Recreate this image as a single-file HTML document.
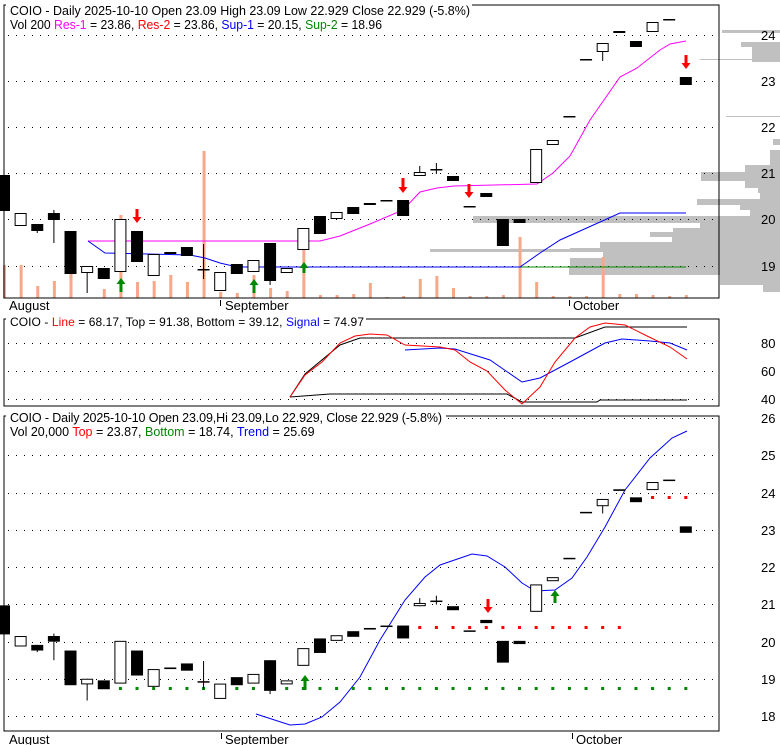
<!DOCTYPE html>
<html><head><meta charset="utf-8"><style>
html,body{margin:0;padding:0;background:#fff;width:780px;height:745px;overflow:hidden}
svg{display:block}
text{font-family:"Liberation Sans",sans-serif;font-size:13px;fill:#000}
</style></head><body>
<svg id="s" width="780" height="745" xmlns="http://www.w3.org/2000/svg">
<g id="g"></g>
<!-- frames -->
<rect x="4" y="5" width="715" height="293" fill="none" stroke="#000" stroke-width="1"/>
<rect x="4" y="319" width="715" height="87" fill="none" stroke="#000" stroke-width="1"/>
<rect x="4" y="416" width="715" height="315" fill="none" stroke="#000" stroke-width="1"/>
<rect x="6" y="0" width="466" height="28" fill="#fff"/>
<rect x="6" y="313" width="360" height="14" fill="#fff"/>
<rect x="6" y="409" width="440" height="30" fill="#fff"/>
<text x="10" y="15" textLength="460" lengthAdjust="spacingAndGlyphs">COIO - Daily 2025-10-10 Open 23.09  High 23.09  Low 22.929  Close 22.929 (-5.8%)</text>
<text x="10" y="29" textLength="372" lengthAdjust="spacingAndGlyphs">Vol 200 <tspan fill="#f0f">Res-1</tspan> = 23.86, <tspan fill="#f00">Res-2</tspan> = 23.86, <tspan fill="#00f">Sup-1</tspan> = 20.15, <tspan fill="#080">Sup-2</tspan> = 18.96</text>
<text x="10" y="326" style="font-size:12px" textLength="354">COIO - <tspan fill="#f00">Line</tspan> = 68.17, Top = 91.38, Bottom = 39.12, <tspan fill="#00f">Signal</tspan> = 74.97</text>
<text x="10" y="422" style="font-size:12.5px" textLength="432">COIO - Daily 2025-10-10 Open 23.09,Hi 23.09,Lo 22.929, Close 22.929 (-5.8%)</text>
<text x="10" y="436" style="font-size:12.5px">Vol 20,000 <tspan fill="#f00">Top</tspan> = 23.87, <tspan fill="#080">Bottom</tspan> = 18.74, <tspan fill="#00f">Trend</tspan> = 25.69</text>
<g id="lab"></g>
<text x="9" y="310">August</text><text x="225" y="310">September</text><text x="573" y="310">October</text>
<text x="9" y="744">August</text><text x="225" y="744">September</text><text x="576" y="744">October</text>
<line x1="220.5" y1="300" x2="220.5" y2="306" stroke="#000"/><line x1="569.5" y1="300" x2="569.5" y2="306" stroke="#000"/>
<line x1="221.5" y1="733" x2="221.5" y2="739" stroke="#000"/><line x1="572.5" y1="733" x2="572.5" y2="739" stroke="#000"/>
</svg>
<script>
var NS="http://www.w3.org/2000/svg",g=document.getElementById('g'),lab=document.getElementById('lab');
function el(t,a,p){var e=document.createElementNS(NS,t);for(var k in a)e.setAttribute(k,a[k]);(p||g).appendChild(e);return e}
function X(i){return 4+16.63*i}
var vp=[[30,33,722],[42,47,741],[47,62,752],[59,60,700],[116,117,726],[139,145,773],[150,165,770],[165,172,745],[172,181,701],[181,188,745],[188,193,758],[193,199,760],[199,205,697],[205,210,740],[210,216,750],[216,223,473],[223,228,700],[228,232,673],[232,237,650],[237,242,672],[242,248,600],[249,252,430],[248,252,570],[252,258,603],[258,266,570],[266,275,569],[275,285,720],[285,292,763]];
vp.forEach(function(b){el('rect',{x:b[2],y:b[0],width:780-b[2],height:b[1]-b[0],fill:'#c0c0c0'})});
function dots(y,x2){for(var x=8;x<x2;x+=8)el('rect',{x:x,y:y,width:1,height:1,fill:'#000'})}
[35,81,127,173,219,266].forEach(function(y){dots(y,719)});
[343,371,399].forEach(function(y){dots(y,719)});
[418,455,493,530,567,604,642,679,716].forEach(function(y){dots(y,719)});
[[24,35],[23,81],[22,127],[21,173],[20,219],[19,266]].forEach(function(a){el('text',{x:761,y:a[1]+5},lab).textContent=a[0]});
[[80,343],[60,371],[40,399]].forEach(function(a){el('text',{x:761,y:a[1]+5},lab).textContent=a[0]});
[[26,418],[25,455],[24,493],[23,530],[22,567],[21,604],[20,642],[19,679],[18,716]].forEach(function(a){el('text',{x:761,y:a[1]+5},lab).textContent=a[0]});
var vol={0:265,1:265,2:286,3:281,4:265,6:289,7:215,8:282,9:281,10:275,11:282,12:151,13:292,14:293,15:275,16:288,17:291,18:250,19:295,20:295,21:294,22:283,23:297,24:296,25:279,26:276,27:288,28:296,29:296,30:295,31:237,32:282,33:296,34:296,35:296,36:257,37:294,38:294,39:295,40:296,41:295};
for(var i in vol)el('rect',{x:X(+i)-1,y:vol[i],width:3,height:298-vol[i],fill:'#f7a78a'});
function pl(p,c,w){el('polyline',{points:p,fill:'none',stroke:c,'stroke-width':w||1})}
pl("88,241 320,241 340,236 370,224 403,210 420,192 437,188 454,186 537,184 553,173 570,156 590,120 620,77 637,68 660,50 670,44 686,41","#f0f");
pl("520,267 686,267","#080");
pl("88,241 105,253 190,255 205,258 220,263 237,267 520,267 540,253 560,240 580,231 620,213 686,213","#00f");
pl("290,397 305,374 340,345 360,338 575,338 605,327 687,327","#000");
pl("290,397 330,394 507,394 522,402 597,402 600,400 687,400","#000");
pl("405,350 440,348 455,349 490,360 522,382 540,378 570,362 605,343 622,339 650,341 670,343 687,350","#00f");
pl("290,397 305,375 322,362 340,343 355,336 370,334 387,335 405,345 440,347 455,350 470,362 487,371 505,390 522,404 540,387 555,362 575,338 590,327 605,323 625,325 645,335 670,347 687,359","#f00");
pl("256,714 290,725 305,724 322,717 340,702 360,677 380,640 405,600 425,577 440,565 472,554 487,556 505,567 522,583 535,591 555,590 572,578 587,557 605,527 625,490 650,458 672,438 687,431","#00f");
for(var i=7;i<=41;i++)el('rect',{x:X(i)-1.5,y:687,width:3,height:3,fill:'#080'});
for(var i=25;i<=37;i++)el('rect',{x:X(i)-1.5,y:626,width:3,height:3,fill:'#f00'});
for(var i=39;i<=41;i++)el('rect',{x:X(i)-1.5,y:496,width:3,height:3,fill:'#f00'});
var C=[[0,175,211,1,172,211],[1,213,226,0],[2,224,231,1,224,233],[3,213,220,1,210,243],[4,231,274,1],[5,266,273,0,266,293],[6,268,279,1],[7,219,272,0],[8,231,262,1],[9,254,276,0],[10,252,254,1],[11,247,256,1],[12,269,270,1,244,279],[13,272,291,0],[14,264,274,1],[15,260,272,0],[16,243,281,1,243,285],[17,268,273,0],[18,228,250,0],[19,216,234,1],[20,212,219,0],[21,207,214,1],[22,203,205,1],[23,200,201,1],[24,200,216,1],[25,172,176,0,166,176],[26,169,170,1,163,174],[27,176,181,1],[28,206,207,1],[29,193,197,1],[30,219,246,1],[31,219,223,1],[32,149,183,0],[33,140,145,0],[34,116,117,1],[35,59,60,1],[36,43,52,0,43,61],[37,31,33,1],[38,41,47,1],[39,22,32,0],[40,19,20,1],[41,77,85,1]];
function B(y){return 492.5+(y-35)*0.8063}
C.forEach(function(c){
  [function(y){return y},B].forEach(function(f){
    var x=X(c[0]);
    if(c[4]!==undefined)el('line',{x1:x,x2:x,y1:f(c[4]),y2:f(c[5]),stroke:'#000'});
    var h=Math.max(f(c[2])-f(c[1]),1);
    if(h<=2)el('rect',{x:x-6,y:f(c[1]),width:12,height:Math.max(h,1.5),fill:'#000'});
    else el('rect',{x:x-5.5,y:f(c[1])+0.5,width:11,height:h-1,fill:c[3]?'#000':'#fff',stroke:'#000'});
  });
});
function up(x,y1,y2){el('polygon',{points:(x-1.5)+','+y2+' '+(x-1.5)+','+(y1+6)+' '+(x-4.5)+','+(y1+6)+' '+x+','+y1+' '+(x+4.5)+','+(y1+6)+' '+(x+1.5)+','+(y1+6)+' '+(x+1.5)+','+y2,fill:'#080'})}
function dn(x,y1,y2){el('polygon',{points:(x-1.5)+','+y1+' '+(x-1.5)+','+(y2-6)+' '+(x-4.5)+','+(y2-6)+' '+x+','+y2+' '+(x+4.5)+','+(y2-6)+' '+(x+1.5)+','+(y2-6)+' '+(x+1.5)+','+y1,fill:'#f00'})}
up(121,278,292);up(254,279,293);up(304,262,273);
dn(137,209,223);dn(403,178,193);dn(469,184,198);dn(686,55,69);
up(305,675,690);up(555,590,603);dn(488,599,613);
</script>
</body></html>
